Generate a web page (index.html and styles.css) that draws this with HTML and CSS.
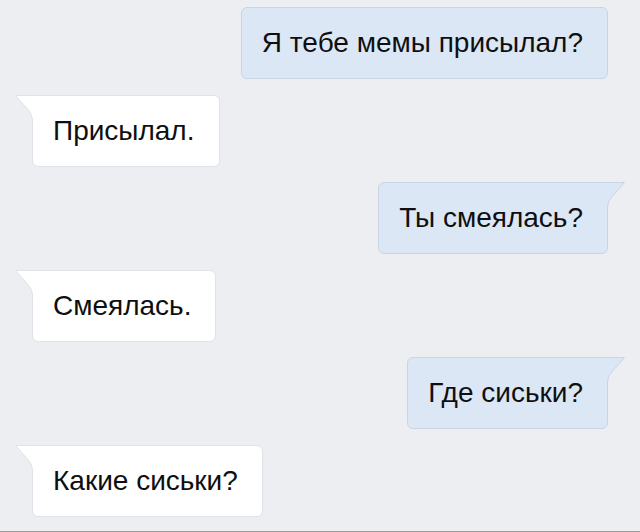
FILE: index.html
```html
<!DOCTYPE html>
<html lang="ru">
<head>
    <meta charset="UTF-8">
    <meta name="viewport" content="width=device-width, initial-scale=1.0">
    <title>Диалог</title>
    <link rel="stylesheet" href="styles.css">
</head>
<body>
    <div class="chat">
        <div class="msg out">Я тебе мемы присылал?</div>

        <div class="msg in">
            <svg class="tail" viewBox="0 0 18 25" width="18" height="25"><path class="tail-fill" d="M18 0.5 L0.5 0.5 L12.5 14 Q17.5 19 17.5 25 L18 25 Z"/><path class="tail-line" d="M18 0.5 L0.5 0.5 L12.5 14 Q17.5 19 17.5 25"/></svg>
            Присылал.
        </div>

        <div class="msg out">
            <svg class="tail" viewBox="0 0 18 25" width="18" height="25"><path class="tail-fill" d="M18 0.5 L0.5 0.5 L12.5 14 Q17.5 19 17.5 25 L18 25 Z"/><path class="tail-line" d="M18 0.5 L0.5 0.5 L12.5 14 Q17.5 19 17.5 25"/></svg>
            Ты смеялась?
        </div>

        <div class="msg in">
            <svg class="tail" viewBox="0 0 18 25" width="18" height="25"><path class="tail-fill" d="M18 0.5 L0.5 0.5 L12.5 14 Q17.5 19 17.5 25 L18 25 Z"/><path class="tail-line" d="M18 0.5 L0.5 0.5 L12.5 14 Q17.5 19 17.5 25"/></svg>
            Смеялась.
        </div>

        <div class="msg out">
            <svg class="tail" viewBox="0 0 18 25" width="18" height="25"><path class="tail-fill" d="M18 0.5 L0.5 0.5 L12.5 14 Q17.5 19 17.5 25 L18 25 Z"/><path class="tail-line" d="M18 0.5 L0.5 0.5 L12.5 14 Q17.5 19 17.5 25"/></svg>
            Где сиськи?
        </div>

        <div class="msg in">
            <svg class="tail" viewBox="0 0 18 25" width="18" height="25"><path class="tail-fill" d="M18 0.5 L0.5 0.5 L12.5 14 Q17.5 19 17.5 25 L18 25 Z"/><path class="tail-line" d="M18 0.5 L0.5 0.5 L12.5 14 Q17.5 19 17.5 25"/></svg>
            Какие сиськи?
        </div>
    </div>
</body>
</html>
```

FILE: styles.css
```css
body {
    margin: 0;
    background: #eceef2;
    font-family: "Liberation Sans", Arial, sans-serif;
    color: #0f0f0f;
}
.chat {
    display: flex;
    flex-direction: column;
    gap: 15.6px;
    min-height: 532px;
    box-sizing: border-box;
    padding: 7px 32px 0;
    border-bottom: 1px solid #9a9a9c;
}
.msg {
    position: relative;
    padding: 19px 24px 19px 20px;
    font-size: 28px;
    line-height: 32px;
    border-radius: 6px;
    white-space: nowrap;
}
.in {
    align-self: flex-start;
    background: #fff;
    border: 1px solid #dfe2e8;
    border-top-left-radius: 0;
}
.out {
    align-self: flex-end;
    background: #dce7f5;
    border: 1px solid #c8d5e7;
}
.out:has(.tail) {
    border-top-right-radius: 0;
}

/* little speech tail at the upper corner */
.tail {
    position: absolute;
    top: -1px;
    display: block;
}
.in .tail {
    left: -18px;
}
.out .tail {
    right: -18px;
    transform: scaleX(-1);
}
.tail-line {
    fill: none;
    stroke-width: 1;
}
.in .tail-fill { fill: #fff; }
.in .tail-line { stroke: #dfe2e8; }
.out .tail-fill { fill: #dce7f5; }
.out .tail-line { stroke: #c8d5e7; }
```
